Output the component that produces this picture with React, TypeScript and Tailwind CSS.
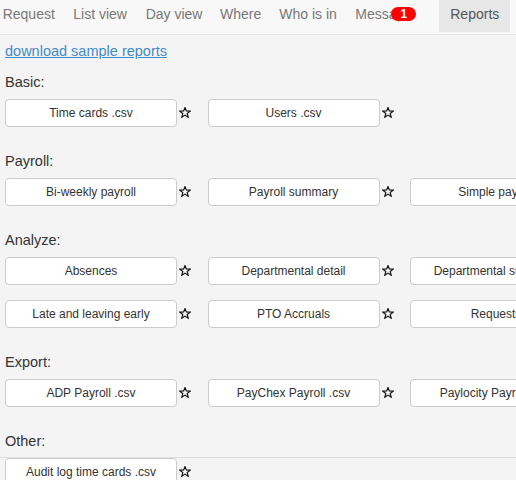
import React from "react";

type Section = { title: string; rows: string[][] };

const sections: Section[] = [
  { title: "Basic:", rows: [["Time cards .csv", "Users .csv"]] },
  {
    title: "Payroll:",
    rows: [["Bi-weekly payroll", "Payroll summary", "Simple payroll"]],
  },
  {
    title: "Analyze:",
    rows: [
      ["Absences", "Departmental detail", "Departmental summary"],
      ["Late and leaving early", "PTO Accruals", "Requests"],
    ],
  },
  {
    title: "Export:",
    rows: [["ADP Payroll .csv", "PayChex Payroll .csv", "Paylocity Payroll .csv"]],
  },
  { title: "Other:", rows: [["Audit log time cards .csv"]] },
];

function Star() {
  return (
    <svg width="12" height="11" viewBox="0 0 11 11" className="ml-[2px] -mt-[2px] shrink-0">
      <polygon
        points="5.5,0.5 6.85,3.94 10.73,4.1 7.69,6.51 8.73,10.25 5.5,8.1 2.27,10.25 3.31,6.51 0.27,4.1 4.15,3.94"
        fill="none"
        stroke="#111"
        strokeWidth="1.15"
        strokeLinejoin="miter"
      />
    </svg>
  );
}

function ReportButton({ label }: { label: string }) {
  return (
    <div className="flex w-[202.5px] shrink-0 items-center">
      <button
        type="button"
        className="h-[28px] w-[172px] shrink-0 rounded-[4px] border border-[#ccc] bg-white text-center text-[12px] leading-[26px] whitespace-nowrap text-[#333]"
      >
        {label}
      </button>
      <Star />
    </div>
  );
}

export default function App() {
  return (
    <div className="relative h-[480px] w-[516px] overflow-hidden bg-[#f4f4f4] font-['Liberation_Sans',Arial,sans-serif]">
      {/* top navigation */}
      <div className="flex h-[35px] items-start border-b border-[#e7e7e7] bg-[#f8f8f8] text-[14px] leading-[20px] whitespace-nowrap text-[#777]">
        <div className="ml-[2.7px] h-[32px] w-[70.6px] shrink-0 pt-[4px]">Request</div>
        <div className="h-[32px] w-[72.4px] shrink-0 pt-[4px]">List view</div>
        <div className="h-[32px] w-[74.3px] shrink-0 pt-[4px]">Day view</div>
        <div className="h-[32px] w-[59.3px] shrink-0 pt-[4px]">Where</div>
        <div className="h-[32px] w-[76px] shrink-0 pt-[4px]">Who is in</div>
        <div className="relative h-[32px] w-[83.7px] shrink-0 pt-[4px]">
          <span className="block w-[44px] overflow-hidden">Messages</span>
          <span className="absolute top-[7px] left-[36px] flex h-[14px] w-[25px] items-center justify-center rounded-full bg-[#f00] text-[12px] leading-none font-bold text-white">
            1
          </span>
        </div>
        <div className="h-[32px] w-[71px] shrink-0 bg-[#e7e7e7] pt-[4px] pl-[11.3px] text-[#555]">
          Reports
        </div>
      </div>

      {/* report list */}
      <div className="flex flex-col items-start pt-[6px] pl-[5px]">
        <a
          href="#"
          className="mb-[12px] block text-[14.5px] leading-[20px] text-[#428bca] underline"
        >
          download sample reports
        </a>
        {sections.map((section) => (
          <div key={section.title} className="flex flex-col pb-[10px]">
            <div className="mb-[6px] -mt-[1px] pb-[1px] text-[14.5px] leading-[20px] text-[#333]">
              {section.title}
            </div>
            {section.rows.map((row, i) => (
              <div key={i} className="mb-[15px] flex flex-nowrap">
                {row.map((label) => (
                  <ReportButton key={label} label={label} />
                ))}
              </div>
            ))}
          </div>
        ))}
      </div>

      {/* footer rule */}
      <div className="absolute top-[457px] right-0 left-0 h-px bg-[#dedede]" />
    </div>
  );
}
